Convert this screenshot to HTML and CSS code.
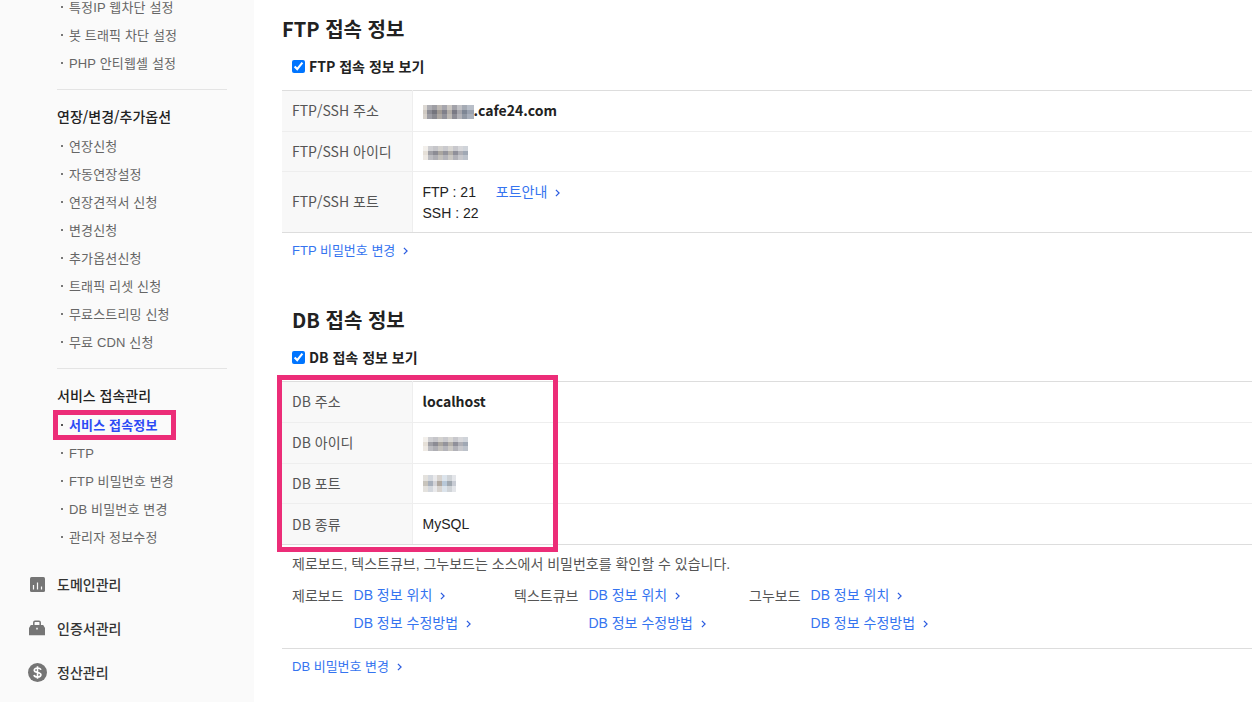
FILE: index.html
```html
<!DOCTYPE html>
<html lang="ko">
<head>
<meta charset="utf-8">
<title>서비스 접속정보</title>
<link rel="stylesheet" href="styles.css">
</head>
<body>
<div class="page">
  <aside class="side">
    <ul class="sub first">
      <li>특정IP 웹차단 설정</li>
      <li>봇 트래픽 차단 설정</li>
      <li>PHP 안티웹셸 설정</li>
    </ul>
    <hr class="rule">
    <h4 class="group">연장/변경/추가옵션</h4>
    <ul class="sub">
      <li>연장신청</li>
      <li>자동연장설정</li>
      <li>연장견적서 신청</li>
      <li>변경신청</li>
      <li>추가옵션신청</li>
      <li>트래픽 리셋 신청</li>
      <li>무료스트리밍 신청</li>
      <li>무료 CDN 신청</li>
    </ul>
    <hr class="rule">
    <h4 class="group">서비스 접속관리</h4>
    <ul class="sub">
      <li class="active">서비스 접속정보</li>
      <li>FTP</li>
      <li>FTP 비밀번호 변경</li>
      <li>DB 비밀번호 변경</li>
      <li>관리자 정보수정</li>
    </ul>
    <nav class="top-menu">
      <div class="top-item">
        <svg class="ico" viewBox="0 0 15 15"><rect width="15" height="15" rx="1.500" fill="#757575"/><path d="M3.500 8v4.500M7.500 5.500v7M11.500 9.500v3" stroke="#fafafa" stroke-width="1.200" fill="none"/></svg>
        <span>도메인관리</span>
      </div>
      <div class="top-item">
        <svg class="ico case" viewBox="0 0 16 16"><path d="M4.800 5V2.500C4.800 1.800 5.300 1.300 6 1.300h4c.7 0 1.200.5 1.200 1.300V5" fill="none" stroke="#757575" stroke-width="1.500"/><path d="M1.800 5h12.400L16 8v7.200H0V8z" fill="#757575"/><path d="M7 7.800h2v1.600H7z" fill="#d8d8d8"/></svg>
        <span>인증서관리</span>
      </div>
      <div class="top-item">
        <svg class="ico coin" viewBox="0 0 20 20"><circle cx="10" cy="10" r="10" fill="#757575"/><path d="M13.500 7.200C13.200 5.800 11.800 5.200 10 5.200c-2 0-3.400.9-3.400 2.400 0 3.300 7 1.600 7 4.800 0 1.500-1.600 2.400-3.600 2.400-1.900 0-3.400-.8-3.700-2.200M10 3.300v13.400" fill="none" stroke="#fff" stroke-width="1.700"/></svg>
        <span>정산관리</span>
      </div>
    </nav>
  </aside>

  <main class="main">
    <h2 class="title ftp-title">FTP 접속 정보</h2>
    <label class="check"><input type="checkbox" checked>FTP 접속 정보 보기</label>
    <table class="info ftp-info">
      <tr><th>FTP/SSH 주소</th><td class="strong"><span class="blur b-dark"></span>.cafe24.com</td></tr>
      <tr class="short"><th>FTP/SSH 아이디</th><td><span class="blur b-light"></span></td></tr>
      <tr class="port"><th>FTP/SSH 포트</th><td>
        <div>FTP : 21 <a class="link port-link">포트안내<svg class="chev" viewBox="0 0 6 10"><path d="M1 1l4 4-4 4"/></svg></a></div>
        <div>SSH : 22</div>
      </td></tr>
    </table>
    <a class="link under">FTP 비밀번호 변경<svg class="chev" viewBox="0 0 6 10"><path d="M1 1l4 4-4 4"/></svg></a>

    <h2 class="title db-title">DB 접속 정보</h2>
    <label class="check"><input type="checkbox" checked>DB 접속 정보 보기</label>
    <div class="db-wrap">
      <table class="info">
        <tr><th>DB 주소</th><td class="strong">localhost</td></tr>
        <tr><th>DB 아이디</th><td><span class="blur b-light"></span></td></tr>
        <tr class="short"><th>DB 포트</th><td><span class="blur b-port"></span></td></tr>
        <tr class="last"><th>DB 종류</th><td>MySQL</td></tr>
      </table>
      <div class="mark"></div>
    </div>
    <p class="note">제로보드, 텍스트큐브, 그누보드는 소스에서 비밀번호를 확인할 수 있습니다.</p>
    <div class="boards">
      <div class="board b1">
        <span class="bname">제로보드</span>
        <div class="blinks">
          <a class="link">DB 정보 위치<svg class="chev" viewBox="0 0 6 10"><path d="M1 1l4 4-4 4"/></svg></a>
          <a class="link">DB 정보 수정방법<svg class="chev" viewBox="0 0 6 10"><path d="M1 1l4 4-4 4"/></svg></a>
        </div>
      </div>
      <div class="board b2">
        <span class="bname">텍스트큐브</span>
        <div class="blinks">
          <a class="link">DB 정보 위치<svg class="chev" viewBox="0 0 6 10"><path d="M1 1l4 4-4 4"/></svg></a>
          <a class="link">DB 정보 수정방법<svg class="chev" viewBox="0 0 6 10"><path d="M1 1l4 4-4 4"/></svg></a>
        </div>
      </div>
      <div class="board b3">
        <span class="bname">그누보드</span>
        <div class="blinks">
          <a class="link">DB 정보 위치<svg class="chev" viewBox="0 0 6 10"><path d="M1 1l4 4-4 4"/></svg></a>
          <a class="link">DB 정보 수정방법<svg class="chev" viewBox="0 0 6 10"><path d="M1 1l4 4-4 4"/></svg></a>
        </div>
      </div>
    </div>
    <hr class="db-rule">
    <a class="link under small">DB 비밀번호 변경<svg class="chev" viewBox="0 0 6 10"><path d="M1 1l4 4-4 4"/></svg></a>
  </main>
</div>
</body>
</html>
```
FILE: styles.css
```css
*, *::before, *::after { box-sizing: border-box; }
html, body { margin: 0; padding: 0; height: 702px; overflow: hidden; background: #fff; }
body { font-family: "Noto Sans CJK KR", "Noto Sans", sans-serif; font-size: 14px; color: #222; }
ul { list-style: none; margin: 0; padding: 0; }

.page { display: flex; height: 702px; overflow: hidden; }
.side { width: 254px; flex: none; background: #fafafa; padding: 0 14px 0 57px; }

.sub { font-family: "Liberation Sans", "Noto Sans CJK KR", sans-serif; font-size: 13px; letter-spacing: .15px; }
.sub.first { padding-top: 1px; margin-top: -8px; }
.sub li { height: 28px; line-height: 30px; padding-left: 12px; color: #666; position: relative; white-space: nowrap; }
.sub li::before { content: ""; position: absolute; left: 4px; top: 13px; width: 2px; height: 2px; background: #777; }
.sub li.active { color: #2c4bf5; font-weight: 700; }
.sub li.active::before { background: #555; }
.sub li.active::after { content: ""; position: absolute; left: -4px; top: -1px; width: 123px; height: 30px; border: 5px solid #ec2d78; }

.rule { margin: 12px 13px 0 0; border: 0; border-top: 1px solid #e4e4e4; }
.group { margin: 13px 0 3px; height: 26px; line-height: 26px; font-size: 14px; font-weight: 500; color: #222; }

.top-menu { margin: 11px 0 0 -27px; }
.top-item { display: flex; align-items: center; height: 44px; font-size: 14px; font-weight: 500; color: #333; }
.ico { width: 15px; height: 15px; margin: 0 12px 0 0; flex: none; }
.case { width: 16px; height: 16px; margin: 0 12px 0 -1px; }
.coin { width: 19px; height: 19px; margin: 0 10px 0 -2px; }

.main { flex: 1; min-width: 0; padding: 0 0 0 28px; }
.title { margin: 0; font-size: 20px; font-weight: 700; line-height: 28px; color: #222; }
.ftp-title { padding-top: 15px; height: 44px; }
.db-title { margin-top: 45px; padding-left: 10px; height: 29px; }
.check { display: flex; align-items: center; height: 20px; margin: 12px 0 0 10px; font-weight: 700; color: #222; }
.check input { margin: 0 4px 0 0; width: 13px; height: 13px; accent-color: #0075ff; }

.info { width: 100%; border-collapse: collapse; table-layout: fixed; margin-top: 14px; border-top: 1px solid #ddd; }
.info th { width: 130px; height: 41px; padding: 0 0 2px 10px; background: #f8f8f8; color: #555; font-weight: 400; text-align: left; border-right: 1px solid #eee; border-bottom: 1px solid #eee; }
.info td { padding: 0 0 0 10px; border-bottom: 1px solid #eee; color: #222; font-family: "Liberation Sans", "Noto Sans CJK KR", sans-serif; }
.info tr:last-child th, .info tr:last-child td { border-bottom-color: #ddd; }
.info .strong { font-family: "Noto Sans CJK KR", sans-serif; font-weight: 700; padding-bottom: 2px; }
.info .short th { height: 40px; }
.info .port th { height: 61px; }
.info .port td { line-height: 21px; padding-top: 2px; }
.info .last th { padding-bottom: 0; }
.port-link { margin-left: 16px; }

.blur { display: inline-block; height: 14px; vertical-align: -3px; filter: blur(.5px); }
.b-dark { width: 51px; background:
  linear-gradient(180deg, rgba(255,255,255,.3) 0 33%, rgba(255,255,255,0) 33% 67%, rgba(255,255,255,.15) 67%),
  linear-gradient(90deg, #cfc9c2 0 4px, #8c8c94 4px 9px, #75757d 9px 14px, #a09a94 14px 19px, #80808a 19px 24px, #b3aea8 24px 29px, #7a7a84 29px 34px, #a6a6ac 34px 39px, #7e8694 39px 44px, #9aa2b0 44px 51px); }
.b-light { width: 45px; background:
  linear-gradient(180deg, rgba(255,255,255,.5) 0 33%, rgba(255,255,255,0) 33% 67%, rgba(255,255,255,.3) 67%),
  linear-gradient(90deg, #e6e0d8 0 5px, #a0a0a6 5px 10px, #8c8c94 10px 15px, #aaa6a0 15px 20px, #94949c 20px 25px, #b4b0aa 25px 30px, #90909a 30px 35px, #b0b0b6 35px 40px, #a0a8b4 40px 45px); }
.b-port { width: 33px; height: 17px; vertical-align: middle; background:
  linear-gradient(180deg, rgba(255,255,255,.5) 0 33%, rgba(255,255,255,0) 33% 67%, rgba(255,255,255,.5) 67%),
  linear-gradient(90deg, #c8c4bc 0 5px, #a8b0bc 5px 10px, #d4d4d8 10px 14px, #b0a8a0 14px 19px, #b8c8d8 19px 24px, #a0a8b0 24px 29px, #c8ccd4 29px 33px); }

.link { color: #3574f0; white-space: nowrap; font-family: "Liberation Sans", "Noto Sans CJK KR", sans-serif; }
.chev { width: 5px; height: 8px; margin-left: 8px; fill: none; stroke: #2a5be0; stroke-width: 1.500; }

.under { display: block; margin: 8px 0 0 10px; line-height: 20px; font-size: 13px; }
.db-wrap { position: relative; }
.mark { position: absolute; left: -5px; top: -6px; width: 281px; height: 177px; border: 5px solid #ec2d78; pointer-events: none; }

.note { margin: 9px 0 0 10px; line-height: 20px; color: #555; font-family: "Liberation Sans", "Noto Sans CJK KR", sans-serif; }
.boards { display: flex; margin: 7px 0 0 10px; }
.board { display: flex; }
.b1 { width: 222px; }
.b2 { width: 235px; }
.bname { color: #555; line-height: 28px; margin-right: 10px; }
.blinks { display: flex; flex-direction: column; }
.blinks .link { height: 28px; line-height: 28px; }
.db-rule { border: 0; border-top: 1px solid #ddd; margin: 11px 0 0; }
```
